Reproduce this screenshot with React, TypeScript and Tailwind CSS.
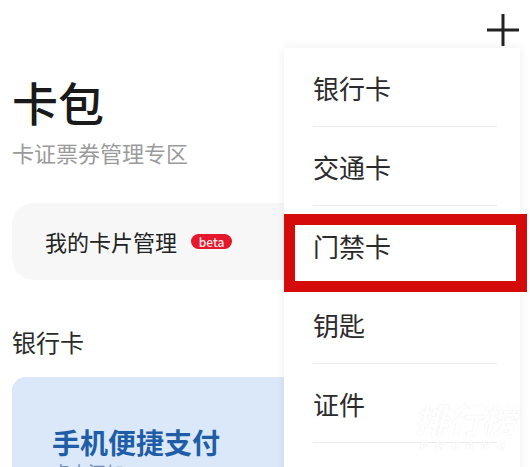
const menuItems = ["银行卡", "交通卡", "门禁卡", "钥匙", "证件"];

function PlusIcon() {
  return (
    <svg width="34" height="34" viewBox="0 0 34 34" fill="none">
      <path d="M17 1v32M1 17h32" stroke="#222" strokeWidth="3" />
    </svg>
  );
}

export default function App() {
  return (
    <div
      className="relative w-[530px] h-[467px] overflow-hidden bg-white"
      style={{ fontFamily: '"Noto Sans CJK SC", "Noto Sans", sans-serif' }}
    >
      {/* Header */}
      <div className="h-[60px] flex items-center justify-end pr-[10px]">
        <PlusIcon />
      </div>

      {/* Page content */}
      <div className="px-3">
        <h1 className="mt-[13px] text-[46px] leading-[56px] font-medium text-[#1a1a1a]">卡包</h1>
        <p className="mt-[8px] text-[22px] leading-[30px] text-[#9a9a9a]">卡证票券管理专区</p>

        <div className="mt-[36px] h-[77px] rounded-[22px] bg-[#f7f7f7] flex items-center pl-[33px] gap-[14px]">
          <span className="text-[22px] text-[#222]">我的卡片管理</span>
          <span className="h-[15px] w-[41px] flex items-center justify-center rounded-full bg-[#e5172d] text-[#ffe9ea] text-[12px] leading-[15px] font-medium">
            beta
          </span>
        </div>

        <h2 className="mt-[46px] text-[24px] leading-[32px] text-[#2a2a2a]">银行卡</h2>

        <div className="mt-[19px] h-[140px] rounded-[14px] bg-[#dae8f9] pl-[40px] pt-[47px]">
          <p className="text-[28px] leading-[36px] font-bold text-[#1f5ea6]">手机便捷支付</p>
          <p className="text-[18px] leading-[24px] text-[#6f8fb5]">点击添加</p>
        </div>
      </div>

      {/* Add menu */}
      <div className="absolute left-[284px] top-[48px] w-[236px] h-[440px] bg-white shadow-[0_0_10px_rgba(0,0,0,0.07)]">
        {menuItems.map((item) => (
          <div key={item} className="h-[79px] mx-[23px] ml-[29px] flex items-center border-b border-[#ececec]">
            <span className="text-[26px] text-[#2b2b2b]">{item}</span>
          </div>
        ))}
      </div>

      {/* Highlight */}
      <div className="absolute left-[284px] top-[214px] w-[243px] h-[78px] border-[11px] border-[#d50b0b]" />

      {/* Watermark */}
      <div className="absolute left-[414px] top-[400px] flex flex-col items-center text-white italic [text-shadow:0_0_1px_rgba(0,0,0,0.12)]">
        <span className="text-[34px] leading-[38px] font-bold">排行榜</span>
        <span className="text-[12px] leading-[14px] tracking-[7px] font-bold">PHBANG</span>
      </div>
    </div>
  );
}
